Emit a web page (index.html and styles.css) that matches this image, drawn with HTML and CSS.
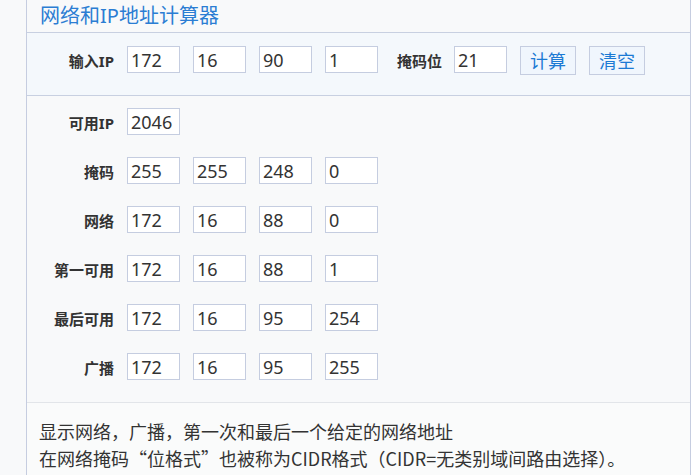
FILE: index.html
```html
<!DOCTYPE html>
<html lang="zh-CN">
<head>
    <meta charset="UTF-8">
    <meta name="viewport" content="width=device-width, initial-scale=1.0">
    <title>网络和IP地址计算器</title>
    <link rel="stylesheet" href="styles.css">
</head>
<body>
    <div class="gutter"></div>
    <div class="panel">
        <h2 class="title">网络和IP地址计算器</h2>

        <div class="ip-row">
            <label class="lbl">输入IP</label>
            <input type="text" class="oct" value="172">
            <input type="text" class="oct" value="16">
            <input type="text" class="oct" value="90">
            <input type="text" class="oct" value="1">
            <label class="lbl mask-lbl">掩码位</label>
            <input type="text" class="oct" value="21">
            <button type="button" class="btn">计算</button>
            <button type="button" class="btn">清空</button>
        </div>

        <div class="results">
            <div class="row">
                <label class="lbl">可用IP</label>
                <input type="text" class="oct" value="2046">
            </div>
            <div class="row">
                <label class="lbl">掩码</label>
                <input type="text" class="oct" value="255">
                <input type="text" class="oct" value="255">
                <input type="text" class="oct" value="248">
                <input type="text" class="oct" value="0">
            </div>
            <div class="row">
                <label class="lbl">网络</label>
                <input type="text" class="oct" value="172">
                <input type="text" class="oct" value="16">
                <input type="text" class="oct" value="88">
                <input type="text" class="oct" value="0">
            </div>
            <div class="row">
                <label class="lbl">第一可用</label>
                <input type="text" class="oct" value="172">
                <input type="text" class="oct" value="16">
                <input type="text" class="oct" value="88">
                <input type="text" class="oct" value="1">
            </div>
            <div class="row">
                <label class="lbl">最后可用</label>
                <input type="text" class="oct" value="172">
                <input type="text" class="oct" value="16">
                <input type="text" class="oct" value="95">
                <input type="text" class="oct" value="254">
            </div>
            <div class="row">
                <label class="lbl">广播</label>
                <input type="text" class="oct" value="172">
                <input type="text" class="oct" value="16">
                <input type="text" class="oct" value="95">
                <input type="text" class="oct" value="255">
            </div>
        </div>

        <div class="note">
            <p>显示网络，广播，第一次和最后一个给定的网络地址</p>
            <p>在网络掩码“位格式”也被称为CIDR格式（CIDR=无类别域间路由选择）。</p>
        </div>
    </div>
</body>
</html>
```

FILE: styles.css
```css
body {
    margin: 0;
    display: flex;
    min-height: 475px;
    background: #f8f9fa;
    font-family: "Noto Sans", "Noto Sans CJK SC", sans-serif;
    color: #333;
}
.gutter {
    width: 26px;
    flex-shrink: 0;
}
.panel {
    width: 663px;
    border-left: 1px solid #c6cde0;
    border-right: 1px solid #c6cde0;
}
.title {
    margin: 0;
    height: 32px;
    line-height: 32px;
    padding-left: 13px;
    font-size: 20px;
    font-weight: normal;
    color: #2b7dd3;
    border-bottom: 1px solid #c8d0e1;
}
.ip-row {
    display: flex;
    align-items: flex-start;
    gap: 13px;
    height: 49px;
    padding-top: 13px;
    background: #f4f8fc;
    border-bottom: 1px solid #c8d0e1;
}
.lbl {
    width: 87px;
    flex-shrink: 0;
    box-sizing: border-box;
    padding-top: 3px;
    line-height: 24px;
    text-align: right;
    font-size: 15px;
    font-weight: bold;
    color: #333;
}
.mask-lbl {
    width: auto;
    margin-left: 6px;
    margin-right: -1px;
}
.oct {
    width: 53px;
    height: 27px;
    box-sizing: border-box;
    margin: 0;
    padding: 0 3px;
    border: 1px solid #c5cde0;
    background: #fff;
    font-family: "Noto Sans", "Noto Sans CJK SC", sans-serif;
    font-size: 18px;
    color: #333;
    outline: none;
}
.btn {
    width: 56px;
    height: 29px;
    padding: 0;
    margin: 0;
    border: 1px solid #c5cde0;
    background: #f0f6fd;
    font-family: "Noto Sans CJK SC", sans-serif;
    font-size: 18px;
    line-height: 27px;
    color: #1c7ad4;
    cursor: pointer;
}
.results {
    display: flex;
    flex-direction: column;
    gap: 22px;
    padding: 12px 0 22px;
    border-bottom: 1px solid #e2e5e9;
}
.row {
    display: flex;
    align-items: center;
    gap: 13px;
}
.note {
    background: #fafbfb;
    padding: 15px 12px 10px;
    font-family: "Noto Sans CJK SC", sans-serif;
    font-size: 18px;
    line-height: 27px;
    color: #333;
}
.note p {
    margin: 0;
}
```
